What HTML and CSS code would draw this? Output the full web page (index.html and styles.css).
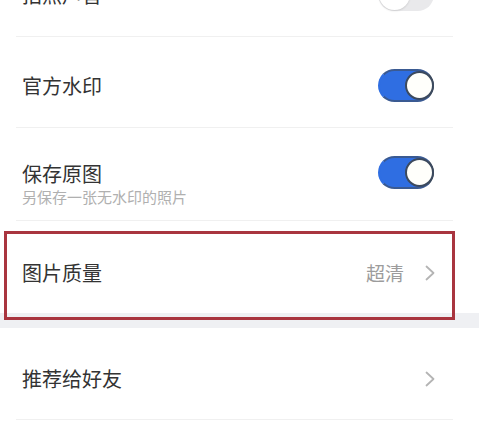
FILE: index.html
```html
<!DOCTYPE html>
<html lang="zh-CN">
<head>
<meta charset="utf-8">
<title>设置</title>
<link rel="stylesheet" href="styles.css">
</head>
<body>
<div class="page">
  <section class="group group-first">
    <div class="row row-toggle">
      <span class="title">拍照声音</span>
      <span class="switch"><span class="knob"></span></span>
    </div>
    <div class="row row-toggle">
      <span class="title">官方水印</span>
      <span class="switch on"><span class="knob"></span></span>
    </div>
    <div class="row row-sub">
      <div class="text">
        <div class="title">保存原图</div>
        <div class="sub">另保存一张无水印的照片</div>
      </div>
      <span class="switch on"><span class="knob"></span></span>
    </div>
    <div class="row row-link row-last">
      <span class="title">图片质量</span>
      <span class="value">超清</span>
      <svg class="chev" viewBox="0 0 12 16" width="12" height="16"><path d="M2.5 1.5 L9.5 8 L2.5 14.5" fill="none" stroke="#b4b4b4" stroke-width="1.8" stroke-linecap="round" stroke-linejoin="round"/></svg>
      <span class="highlight"></span>
    </div>
  </section>
  <div class="gap"></div>
  <section class="group">
    <div class="row row-link row-share">
      <span class="title">推荐给好友</span>
      <svg class="chev" viewBox="0 0 12 16" width="12" height="16"><path d="M2.5 1.5 L9.5 8 L2.5 14.5" fill="none" stroke="#b4b4b4" stroke-width="1.8" stroke-linecap="round" stroke-linejoin="round"/></svg>
    </div>
  </section>
</div>
</body>
</html>
```
FILE: styles.css
```css
html, body {
  margin: 0;
  padding: 0;
  background: #ffffff;
}
body {
  font-family: "Noto Sans CJK SC", "Noto Sans", sans-serif;
  color: #333333;
  overflow: hidden;
  height: 425px;
}
.page {
  width: 479px;
}
.group {
  background: #ffffff;
}
.group-first {
  margin-top: -54px;
}
.row {
  position: relative;
  display: flex;
  align-items: center;
  margin-left: 16px;
  width: 437px;
  box-sizing: border-box;
  padding: 0 19px 0 6px;
  border-bottom: 1px solid #f0f0f0;
}
.row-toggle {
  height: 91px;
  padding-top: 32px;
  padding-bottom: 25px;
}
.row-sub {
  height: 93px;
  align-items: flex-start;
  padding-top: 28px;
  padding-bottom: 31px;
}
.row-sub .text {
  margin-top: 6px;
}
.row-last {
  border-bottom: none;
  height: 92px;
  padding-top: 35px;
  padding-bottom: 24px;
}
.row-share {
  height: 92px;
  padding-top: 34px;
  padding-bottom: 24px;
}
.title {
  font-size: 20px;
  line-height: 24px;
  color: #333333;
  flex: 1;
}
.text {
  flex: 1;
}
.sub {
  margin-top: 1px;
  font-size: 15px;
  line-height: 20px;
  color: #b0b0b0;
}
.switch {
  width: 56px;
  height: 33px;
  border-radius: 17px;
  background: #e9e9eb;
  box-sizing: border-box;
  display: flex;
  align-items: center;
  justify-content: flex-start;
  padding: 1px;
}
.switch .knob {
  width: 31px;
  height: 31px;
  border-radius: 50%;
  background: #ffffff;
  box-sizing: border-box;
  box-shadow: 0 1px 2px rgba(0,0,0,0.12);
}
.switch.on {
  background: #2f6ee2;
  justify-content: flex-end;
  padding: 0;
  border: 2px solid #3c4a5e;
  border-left-color: #2f6ee2;
  border-top-color: #3a5a92;
  border-bottom-color: #3a5a92;
}
.switch.on .knob {
  width: 29px;
  height: 29px;
  border: 2px solid #3c4a5e;
  margin-right: -2px;
  box-shadow: none;
  background: #fffffb;
}
.value {
  font-size: 19px;
  line-height: 24px;
  color: #9c9c9c;
  margin-right: 20px;
}
.chev {
  display: block;
  margin-right: -2px;
}
.highlight {
  position: absolute;
  left: -12px;
  right: -2px;
  top: 10px;
  bottom: -7px;
  border: 3px solid #a9353f;
  pointer-events: none;
}
.gap {
  height: 15px;
  background: #eff0f3;
}
```
